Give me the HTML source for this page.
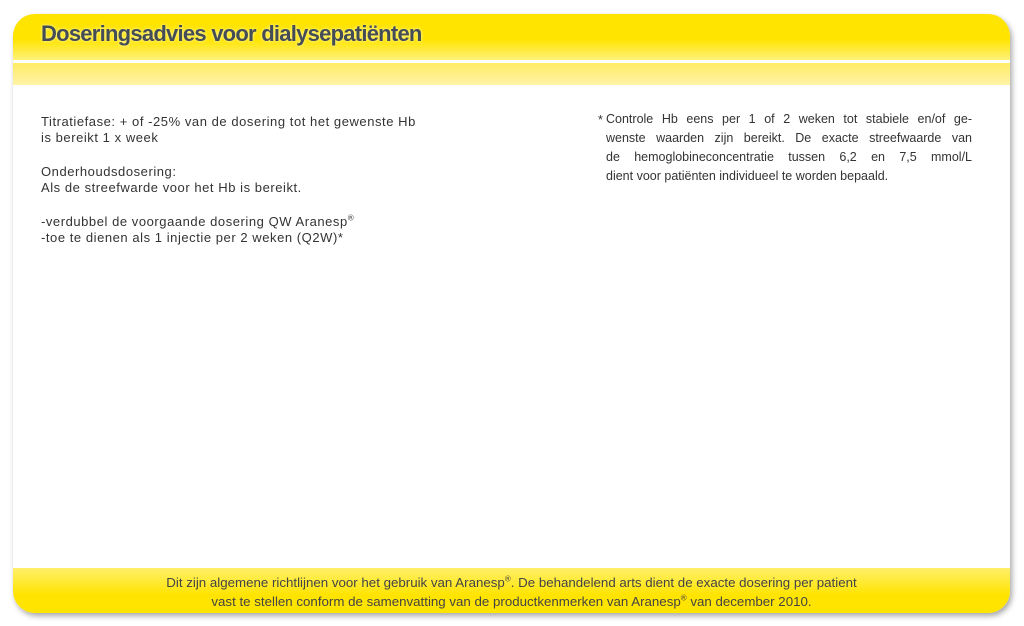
<!DOCTYPE html>
<html><head><style>
body{margin:0;width:1024px;height:626px;background:#fff;position:relative;overflow:hidden;font-family:"Liberation Sans",sans-serif;}
.card{position:absolute;left:13px;top:14px;width:997px;height:599px;border-radius:22px;background:#fff;box-shadow:2px 3px 6px rgba(0,0,0,.35);overflow:hidden;}
.hd{position:absolute;left:0;top:0;width:100%;height:46px;background:linear-gradient(#ffe400,#ffe400 55%,#fff27a);}
.hd h1{margin:0;position:absolute;left:28px;top:7px;font-size:22px;font-weight:bold;color:#444c56;letter-spacing:-0.75px;text-shadow:0 0 3px #fff8c0;}
.band{position:absolute;left:0;top:49px;width:100%;height:22px;background:linear-gradient(#ffec66,#fff3a8);}
.t{position:absolute;font-size:12.5px;color:#333;line-height:16px;}
.l{left:28px;top:100px;width:440px;font-size:13px;letter-spacing:0.55px;}
.l p{margin:0 0 18px;}
.r{left:593px;top:96px;width:366px;}
.r div{text-align:justify;text-align-last:justify;height:19px;line-height:19px;}
.r div.last{text-align-last:left;height:17px;}
.ft{position:absolute;left:0;top:554px;width:100%;height:45px;background:linear-gradient(#fff06a,#ffe400 60%,#ffe400);text-align:center;font-size:13.3px;color:#444;line-height:19px;padding-top:5px;box-sizing:border-box;}
sup{font-size:8px;line-height:0;}
</style></head><body>
<div class="card">
<div class="hd"><h1>Doseringsadvies voor dialysepatiënten</h1></div>
<div class="band"></div>
<div class="t l">
<p>Titratiefase: + of -25% van de dosering tot het gewenste Hb<br>is bereikt 1 x week</p>
<p>Onderhoudsdosering:<br>Als de streefwarde voor het Hb is bereikt.</p>
<p>-verdubbel de voorgaande dosering QW Aranesp<sup>®</sup><br>-toe te dienen als 1 injectie per 2 weken (Q2W)*</p>
</div>
<div class="t r"><span style="position:absolute;left:-8px;top:2px">*</span>
<div>Controle Hb eens per 1 of 2 weken tot stabiele en/of ge-</div>
<div>wenste waarden zijn bereikt. De exacte streefwaarde van</div>
<div>de hemoglobineconcentratie tussen 6,2 en 7,5 mmol/L</div>
<div class="last">dient voor patiënten individueel te worden bepaald.</div></div>
<div class="ft">Dit zijn algemene richtlijnen voor het gebruik van Aranesp<sup>®</sup>. De behandelend arts dient de exacte dosering per patient<br>vast te stellen conform de samenvatting van de productkenmerken van Aranesp<sup>®</sup> van december 2010.</div>
</div>
</body></html>
